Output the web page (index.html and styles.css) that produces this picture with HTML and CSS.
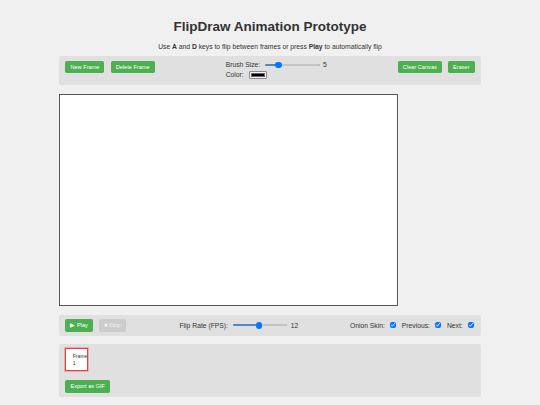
FILE: index.html
```html
<!DOCTYPE html>
<html lang="en">
<head>
<meta charset="UTF-8">
<title>FlipDraw Animation Prototype</title>
<link rel="stylesheet" href="styles.css">
</head>
<body>
<div class="container">
  <h1 class="title">FlipDraw Animation Prototype</h1>
  <p class="instructions">Use <strong>A</strong> and <strong>D</strong> keys to flip between frames or press <strong>Play</strong> to automatically flip</p>

  <div class="toolbar toolbar-top">
    <div class="group">
      <button class="btn">New Frame</button>
      <button class="btn">Delete Frame</button>
    </div>
    <div class="brush-group">
      <div class="control-row row-brush">
        <label class="ctrl-label" for="brushSize">Brush Size:</label>
        <input class="range" type="range" id="brushSize" min="1" max="20" value="5" style="--fill: 24.6%">
        <span class="value">5</span>
      </div>
      <div class="control-row row-color">
        <label class="ctrl-label" for="brushColor">Color:</label>
        <input class="color" type="color" id="brushColor" value="#000000">
      </div>
    </div>
    <div class="group">
      <button class="btn">Clear Canvas</button>
      <button class="btn">Eraser</button>
    </div>
  </div>

  <canvas class="drawing" width="800" height="500"></canvas>

  <div class="toolbar toolbar-bottom">
    <div class="group">
      <button class="btn">&#9654; Play</button>
      <button class="btn" disabled>&#9632; Stop</button>
    </div>
    <div class="control-row">
      <label class="ctrl-label" for="fps">Flip Rate (FPS):</label>
      <input class="range" type="range" id="fps" min="1" max="24" value="12" style="--fill: 48.1%">
      <span class="value">12</span>
    </div>
    <div class="control-row onion">
      <label class="check-label" for="onion">Onion Skin:</label>
      <input class="check" type="checkbox" id="onion" checked>
      <label class="check-label" for="prev">Previous:</label>
      <input class="check" type="checkbox" id="prev" checked>
      <label class="check-label" for="next">Next:</label>
      <input class="check" type="checkbox" id="next" checked>
    </div>
  </div>

  <div class="timeline">
    <div class="frames">
      <div class="thumb thumb-active"><span class="thumb-label">Frame 1</span></div>
    </div>
    <div class="export">
      <button class="btn">Export as GIF</button>
    </div>
  </div>
</div>
</body>
</html>
```

FILE: styles.css
```css
body {
  margin: 0;
  padding: 9.6px 8.44px 7.3px;
  background: #f0f0f0;
  color: #333;
  font-family: Arial, "Liberation Sans", Helvetica, sans-serif;
  font-size: 6.75px;
}

.container {
  max-width: 421.875px;
  margin: 0 auto;
}

.title {
  text-align: center;
  color: #333;
  font-size: 13.5px;
  margin: 9.05px 0;
}

.instructions {
  text-align: center;
  margin: 6.75px 0;
}

.toolbar {
  display: flex;
  justify-content: space-between;
  background: #e0e0e0;
  border-radius: 2.1px;
  padding: 4.22px;
  margin-bottom: 8.44px;
}

.toolbar-top {
  align-items: flex-start;
}

.toolbar-bottom {
  align-items: center;
}

.btn {
  font-family: Arial, "Liberation Sans", Helvetica, sans-serif;
  font-size: 5.625px;
  line-height: 6.5px;
  background: #4caf50;
  color: #fff;
  border: none;
  border-radius: 1.7px;
  padding: 3.1px 5.06px;
  margin: 0 2.11px;
  cursor: pointer;
}

.btn:disabled {
  background: #cccccc;
  color: #f2f2f2;
  cursor: not-allowed;
}

.brush-group {
  display: flex;
  flex-direction: column;
}

.control-row {
  display: flex;
  align-items: center;
}

.row-brush {
  height: 8.44px;
}

.row-color {
  height: 11.8px;
}

.ctrl-label {
  margin-right: 5px;
}

.value {
  margin-left: 3.4px;
}

/* range slider, drawn at the page's small scale */
.range {
  -webkit-appearance: none;
  appearance: none;
  width: 54.4px;
  height: 6.75px;
  margin: 0;
  background: transparent;
}

.range::-webkit-slider-runnable-track {
  height: 1.9px;
  border-radius: 1px;
  background: linear-gradient(to right, #0075ff var(--fill), #efefef var(--fill));
  box-shadow: inset 0 0 0 0.4px #9a9a9a;
}

.range::-webkit-slider-thumb {
  -webkit-appearance: none;
  appearance: none;
  width: 6.75px;
  height: 6.75px;
  margin-top: -2.42px;
  border: none;
  border-radius: 50%;
  background: #0075ff;
}

/* colour picker */
.color {
  -webkit-appearance: none;
  appearance: none;
  box-sizing: border-box;
  width: 18.7px;
  height: 8.8px;
  padding: 0;
  margin: 0;
  border: 0.6px solid #8a8a8a;
  border-radius: 1px;
  background: #f3f3f3;
}

.color::-webkit-color-swatch-wrapper {
  padding: 1.2px 1.3px;
}

.color::-webkit-color-swatch {
  border: 0.4px solid #666;
  border-radius: 0;
}

/* onion-skin checkboxes */
.check-label {
  margin-left: 3px;
}

.check-label:first-child {
  margin-left: 0;
}

.check {
  width: 5.5px;
  height: 5.5px;
  margin: 0 3px 0 5.5px;
}

.drawing {
  display: block;
  box-sizing: content-box;
  width: 337px;
  height: 210.7px;
  background: #fff;
  border: 1px solid #555;
  margin-bottom: 8.44px;
}

.timeline {
  display: flex;
  flex-direction: column;
  gap: 0.9px;
}

.frames {
  display: flex;
  background: #e0e0e0;
  border-radius: 2.1px 2.1px 0 0;
  padding: 4.22px 4.22px 2.32px;
}

.thumb {
  box-sizing: border-box;
  width: 22.8px;
  height: 22.8px;
  margin: 0 2.11px;
  padding-left: 6.4px;
  display: flex;
  align-items: center;
  background: #fff;
  border: 1px solid #dddddd;
  overflow: hidden;
  font-size: 5.06px;
  line-height: 1.3;
  color: #333;
}

.thumb-active {
  border: 1px solid #e8413c;
  box-shadow: 0 0 0 0.6px #ec8a86;
}

.export {
  background: #e0e0e0;
  border-radius: 0 0 2.1px 2.1px;
  padding: 5.5px 4.22px 4px;
}
```
